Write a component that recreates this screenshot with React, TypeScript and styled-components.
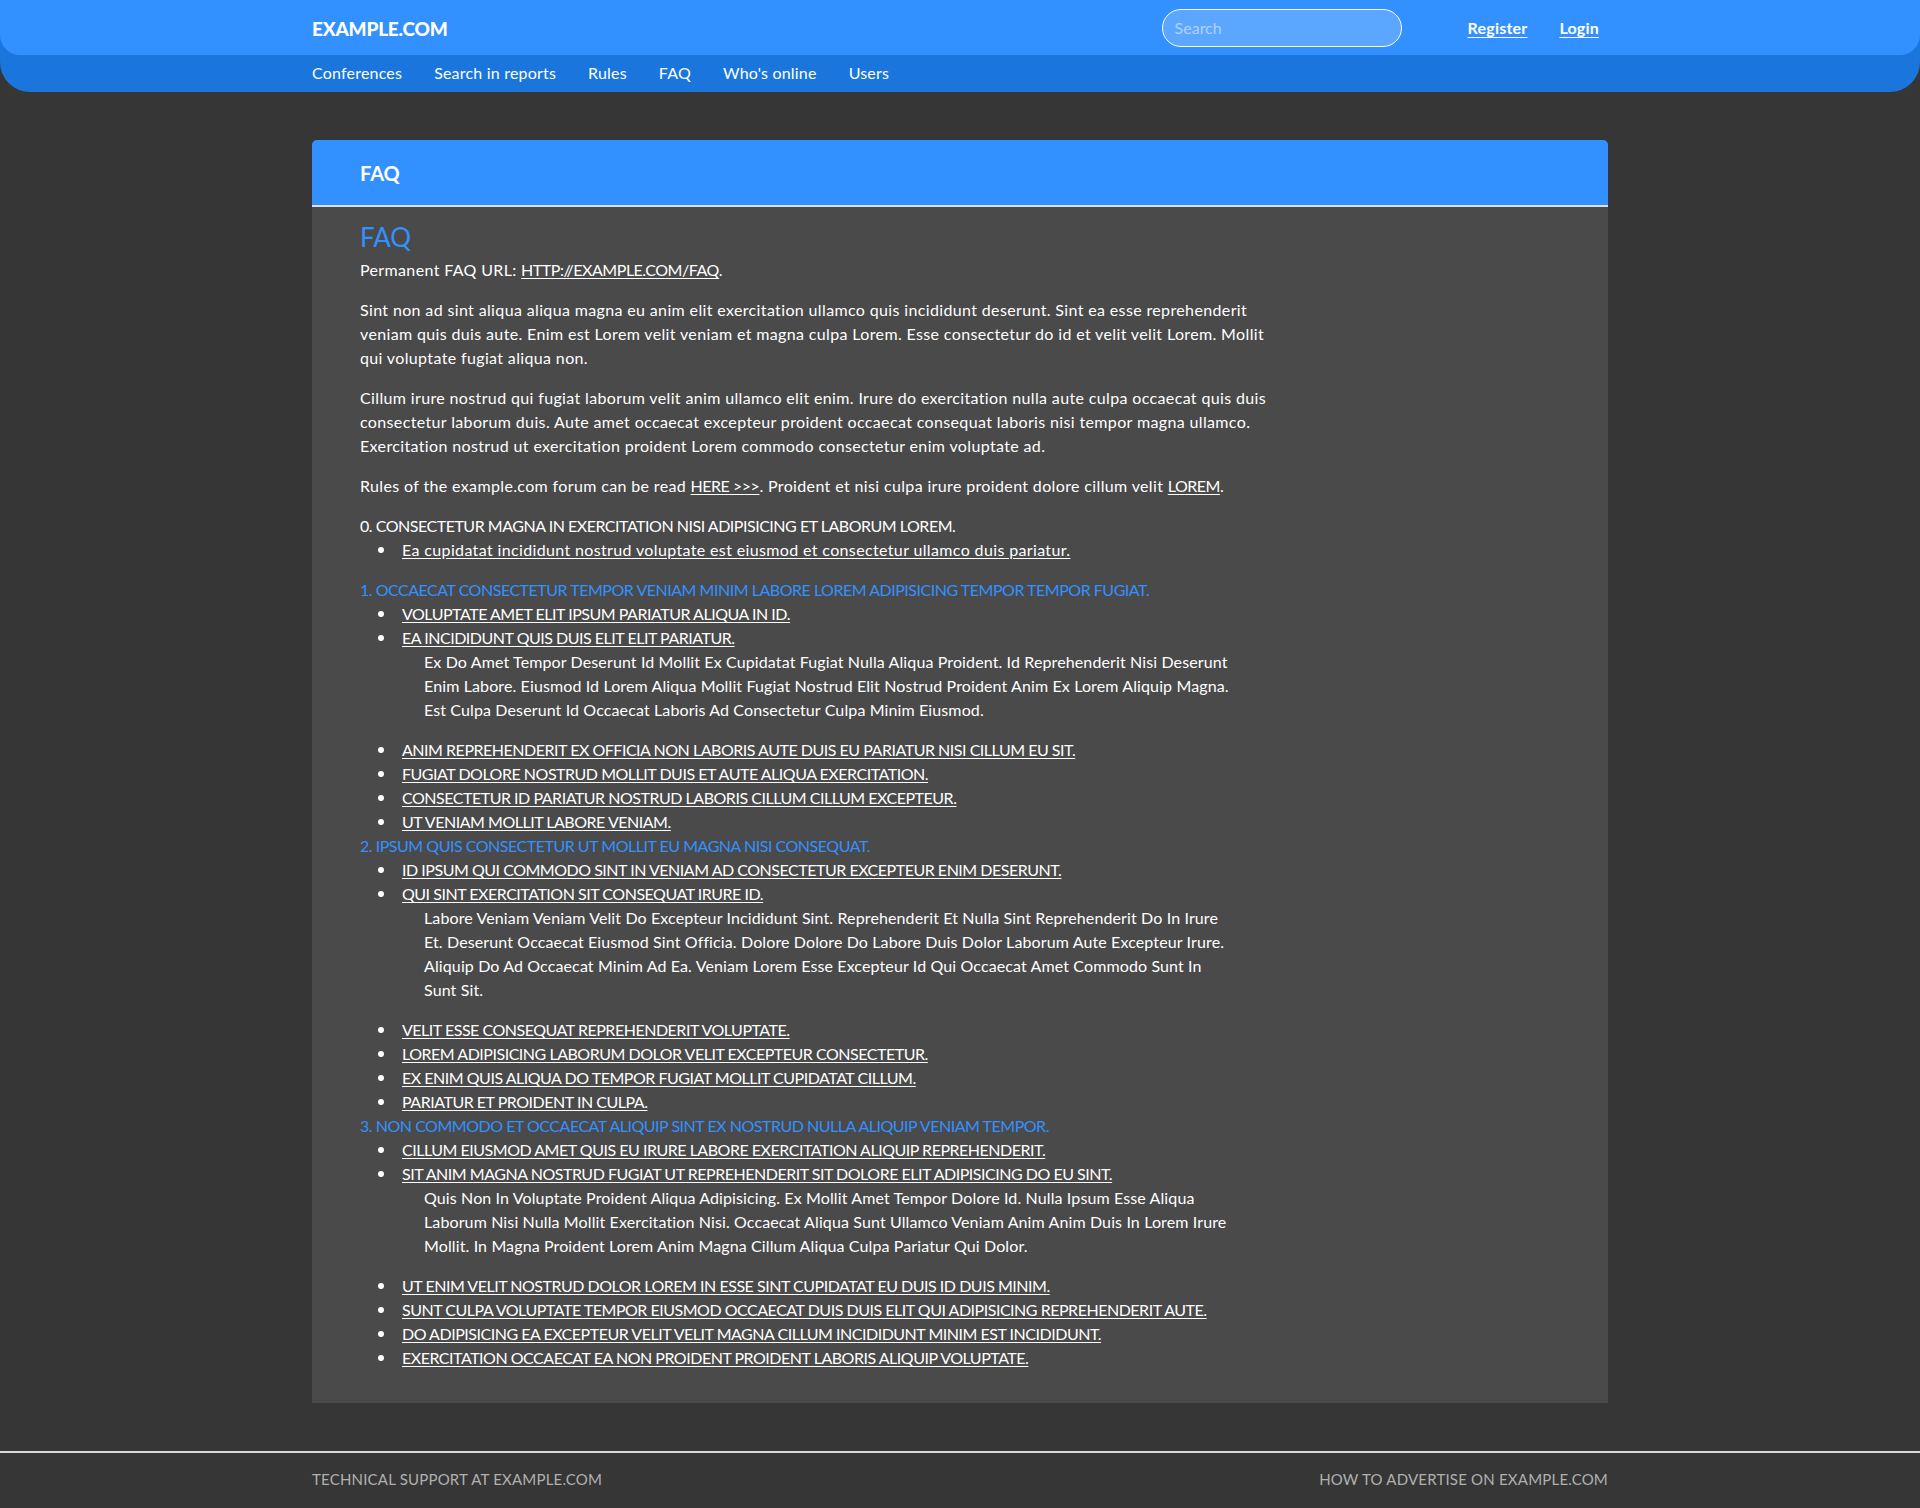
import React from "react";
import styled, { createGlobalStyle } from "styled-components";

const GlobalStyle = createGlobalStyle`
  html, body {
    margin: 0;
    padding: 0;
    background: #363636;
    font-family: "Lato", "Noto Sans", sans-serif;
    color: #ffffff;
  }
  * { box-sizing: border-box; }
`;

const Page = styled.div`
  display: flex;
  flex-direction: column;
`;

const Header = styled.header`
  background: #1a75dc;
  border-radius: 0 0 30px 30px;
`;

const TopBar = styled.div`
  background: #3391ff;
  height: 55px;
  border-radius: 0 0 20px 20px;
`;

const Container = styled.div`
  width: 1296px;
  margin: 0 auto;
`;

const TopInner = styled(Container)`
  height: 100%;
  display: flex;
  align-items: center;
`;

const Logo = styled.a`
  font-size: 19px;
  font-weight: 900;
  letter-spacing: -0.2px;
  color: #fff;
  text-decoration: none;
  margin-right: auto;
  padding-top: 2px;
`;

const Search = styled.input`
  width: 240px;
  height: 38px;
  border-radius: 19px;
  border: 1px solid #ffffff;
  background: rgba(255, 255, 255, 0.2);
  padding: 0 12px;
  font-family: inherit;
  font-size: 16px;
  color: #fff;
  margin-right: 66px;
  outline: none;
  &::placeholder {
    color: rgba(255, 255, 255, 0.5);
  }
`;

const AuthLinks = styled.div`
  display: flex;
  gap: 32px;
  padding-right: 9px;
`;

const AuthLink = styled.a`
  color: #fff;
  font-weight: 700;
  font-size: 16px;
  letter-spacing: 0.2px;
  text-decoration: underline;
  text-underline-offset: 3px;
`;

const NavBar = styled(Container)`
  height: 37px;
  display: flex;
  align-items: center;
  gap: 32px;
  padding-bottom: 3px;
`;

const NavLink = styled.a`
  color: #fff;
  font-size: 16px;
  letter-spacing: 0.2px;
  text-decoration: none;
`;

const Main = styled.main`
  padding-top: 48px;
  padding-bottom: 48px;
`;

const Card = styled(Container)`
  background: #4a4a4a;
  border-radius: 5px 5px 0 0;
  overflow: hidden;
`;

const CardHeader = styled.div`
  background: #3391ff;
  height: 67px;
  border-bottom: 2px solid #e0e0e0;
  display: flex;
  align-items: center;
  padding-left: 48px;
  font-size: 20px;
  font-weight: 700;
`;

const CardBody = styled.div`
  padding: 14px 48px 33px;
`;

const Content = styled.div`
  max-width: 915px;
  font-size: 16px;
  line-height: 24px;
  letter-spacing: 0.36px;
`;

const Title = styled.h2`
  margin: 0 0 5px;
  font-size: 26px;
  line-height: 32px;
  font-weight: 400;
  letter-spacing: 0;
  color: #3391ff;
`;

const P = styled.p`
  margin: 0 0 16px;
`;

const TextLink = styled.a<{ $upper?: boolean }>`
  color: #fff;
  text-decoration: underline;
  text-underline-offset: 2px;
  letter-spacing: ${(p) => (p.$upper ? "-0.48px" : "inherit")};
`;

const SectionTitle = styled.div<{ $accent?: boolean }>`
  color: ${(p) => (p.$accent ? "#3391ff" : "#fff")};
  letter-spacing: -0.48px;
`;

const List = styled.ul<{ $spaced?: boolean }>`
  margin: 0 0 ${(p) => (p.$spaced ? "16px" : "0")};
  padding-left: 42px;
  list-style: none;
`;

const ListItem = styled.li`
  position: relative;
  &::before {
    content: "";
    position: absolute;
    left: -24px;
    top: 9px;
    width: 6px;
    height: 6px;
    border-radius: 50%;
    background: #ffffff;
  }
`;

const Detail = styled.p`
  margin: 0 0 16px;
  padding-left: 22px;
  max-width: 832px;
  letter-spacing: 0.12px;
`;

const Footer = styled.footer`
  border-top: 2px solid #d8d8d8;
  padding: 16px 0 17px;
`;

const FooterInner = styled(Container)`
  display: flex;
  justify-content: space-between;
  font-size: 15px;
  line-height: 20px;
  letter-spacing: 0.2px;
  color: #b0b0b0;
  text-transform: uppercase;
`;

type Item = { text: string; detail?: string };
type Section = { title: string; accent?: boolean; items: Item[]; spaced?: boolean };

const sections: Section[] = [
  {
    title: "0. CONSECTETUR MAGNA IN EXERCITATION NISI ADIPISICING ET LABORUM LOREM.",
    spaced: true,
    items: [{ text: "Ea cupidatat incididunt nostrud voluptate est eiusmod et consectetur ullamco duis pariatur." }],
  },
  {
    title: "1. OCCAECAT CONSECTETUR TEMPOR VENIAM MINIM LABORE LOREM ADIPISICING TEMPOR TEMPOR FUGIAT.",
    accent: true,
    items: [
      { text: "VOLUPTATE AMET ELIT IPSUM PARIATUR ALIQUA IN ID." },
      {
        text: "EA INCIDIDUNT QUIS DUIS ELIT ELIT PARIATUR.",
        detail:
          "Ex Do Amet Tempor Deserunt Id Mollit Ex Cupidatat Fugiat Nulla Aliqua Proident. Id Reprehenderit Nisi Deserunt Enim Labore. Eiusmod Id Lorem Aliqua Mollit Fugiat Nostrud Elit Nostrud Proident Anim Ex Lorem Aliquip Magna. Est Culpa Deserunt Id Occaecat Laboris Ad Consectetur Culpa Minim Eiusmod.",
      },
      { text: "ANIM REPREHENDERIT EX OFFICIA NON LABORIS AUTE DUIS EU PARIATUR NISI CILLUM EU SIT." },
      { text: "FUGIAT DOLORE NOSTRUD MOLLIT DUIS ET AUTE ALIQUA EXERCITATION." },
      { text: "CONSECTETUR ID PARIATUR NOSTRUD LABORIS CILLUM CILLUM EXCEPTEUR." },
      { text: "UT VENIAM MOLLIT LABORE VENIAM." },
    ],
  },
  {
    title: "2. IPSUM QUIS CONSECTETUR UT MOLLIT EU MAGNA NISI CONSEQUAT.",
    accent: true,
    items: [
      { text: "ID IPSUM QUI COMMODO SINT IN VENIAM AD CONSECTETUR EXCEPTEUR ENIM DESERUNT." },
      {
        text: "QUI SINT EXERCITATION SIT CONSEQUAT IRURE ID.",
        detail:
          "Labore Veniam Veniam Velit Do Excepteur Incididunt Sint. Reprehenderit Et Nulla Sint Reprehenderit Do In Irure Et. Deserunt Occaecat Eiusmod Sint Officia. Dolore Dolore Do Labore Duis Dolor Laborum Aute Excepteur Irure. Aliquip Do Ad Occaecat Minim Ad Ea. Veniam Lorem Esse Excepteur Id Qui Occaecat Amet Commodo Sunt In Sunt Sit.",
      },
      { text: "VELIT ESSE CONSEQUAT REPREHENDERIT VOLUPTATE." },
      { text: "LOREM ADIPISICING LABORUM DOLOR VELIT EXCEPTEUR CONSECTETUR." },
      { text: "EX ENIM QUIS ALIQUA DO TEMPOR FUGIAT MOLLIT CUPIDATAT CILLUM." },
      { text: "PARIATUR ET PROIDENT IN CULPA." },
    ],
  },
  {
    title: "3. NON COMMODO ET OCCAECAT ALIQUIP SINT EX NOSTRUD NULLA ALIQUIP VENIAM TEMPOR.",
    accent: true,
    items: [
      { text: "CILLUM EIUSMOD AMET QUIS EU IRURE LABORE EXERCITATION ALIQUIP REPREHENDERIT." },
      {
        text: "SIT ANIM MAGNA NOSTRUD FUGIAT UT REPREHENDERIT SIT DOLORE ELIT ADIPISICING DO EU SINT.",
        detail:
          "Quis Non In Voluptate Proident Aliqua Adipisicing. Ex Mollit Amet Tempor Dolore Id. Nulla Ipsum Esse Aliqua Laborum Nisi Nulla Mollit Exercitation Nisi. Occaecat Aliqua Sunt Ullamco Veniam Anim Anim Duis In Lorem Irure Mollit. In Magna Proident Lorem Anim Magna Cillum Aliqua Culpa Pariatur Qui Dolor.",
      },
      { text: "UT ENIM VELIT NOSTRUD DOLOR LOREM IN ESSE SINT CUPIDATAT EU DUIS ID DUIS MINIM." },
      { text: "SUNT CULPA VOLUPTATE TEMPOR EIUSMOD OCCAECAT DUIS DUIS ELIT QUI ADIPISICING REPREHENDERIT AUTE." },
      { text: "DO ADIPISICING EA EXCEPTEUR VELIT VELIT MAGNA CILLUM INCIDIDUNT MINIM EST INCIDIDUNT." },
      { text: "EXERCITATION OCCAECAT EA NON PROIDENT PROIDENT LABORIS ALIQUIP VOLUPTATE." },
    ],
  },
];

const isUpper = (s: string) => s === s.toUpperCase();

export default function App() {
  return (
    <Page>
      <GlobalStyle />
      <Header>
        <TopBar>
          <TopInner>
            <Logo href="#">EXAMPLE.COM</Logo>
            <Search placeholder="Search" />
            <AuthLinks>
              <AuthLink href="#">Register</AuthLink>
              <AuthLink href="#">Login</AuthLink>
            </AuthLinks>
          </TopInner>
        </TopBar>
        <NavBar as="nav">
          <NavLink href="#">Conferences</NavLink>
          <NavLink href="#">Search in reports</NavLink>
          <NavLink href="#">Rules</NavLink>
          <NavLink href="#">FAQ</NavLink>
          <NavLink href="#">Who's online</NavLink>
          <NavLink href="#">Users</NavLink>
        </NavBar>
      </Header>
      <Main>
        <Card>
          <CardHeader>FAQ</CardHeader>
          <CardBody>
            <Content>
              <Title>FAQ</Title>
              <P>
                Permanent FAQ URL:{" "}
                <TextLink href="#" $upper>
                  HTTP://EXAMPLE.COM/FAQ
                </TextLink>
                .
              </P>
              <P>
                Sint non ad sint aliqua aliqua magna eu anim elit exercitation ullamco quis incididunt deserunt. Sint ea
                esse reprehenderit veniam quis duis aute. Enim est Lorem velit veniam et magna culpa Lorem. Esse
                consectetur do id et velit velit Lorem. Mollit qui voluptate fugiat aliqua non.
              </P>
              <P>
                Cillum irure nostrud qui fugiat laborum velit anim ullamco elit enim. Irure do exercitation nulla aute
                culpa occaecat quis duis consectetur laborum duis. Aute amet occaecat excepteur proident occaecat
                consequat laboris nisi tempor magna ullamco. Exercitation nostrud ut exercitation proident Lorem commodo
                consectetur enim voluptate ad.
              </P>
              <P>
                Rules of the example.com forum can be read{" "}
                <TextLink href="#" $upper>
                  HERE &gt;&gt;&gt;
                </TextLink>
                . Proident et nisi culpa irure proident dolore cillum velit{" "}
                <TextLink href="#" $upper>
                  LOREM
                </TextLink>
                .
              </P>
              {sections.map((s) => (
                <React.Fragment key={s.title}>
                  <SectionTitle $accent={s.accent}>{s.title}</SectionTitle>
                  <List $spaced={s.spaced}>
                    {s.items.map((it) => (
                      <ListItem key={it.text}>
                        <TextLink href="#" $upper={isUpper(it.text)}>
                          {it.text}
                        </TextLink>
                        {it.detail && <Detail>{it.detail}</Detail>}
                      </ListItem>
                    ))}
                  </List>
                </React.Fragment>
              ))}
            </Content>
          </CardBody>
        </Card>
      </Main>
      <Footer>
        <FooterInner>
          <span>Technical support at example.com</span>
          <span>How to advertise on example.com</span>
        </FooterInner>
      </Footer>
    </Page>
  );
}
